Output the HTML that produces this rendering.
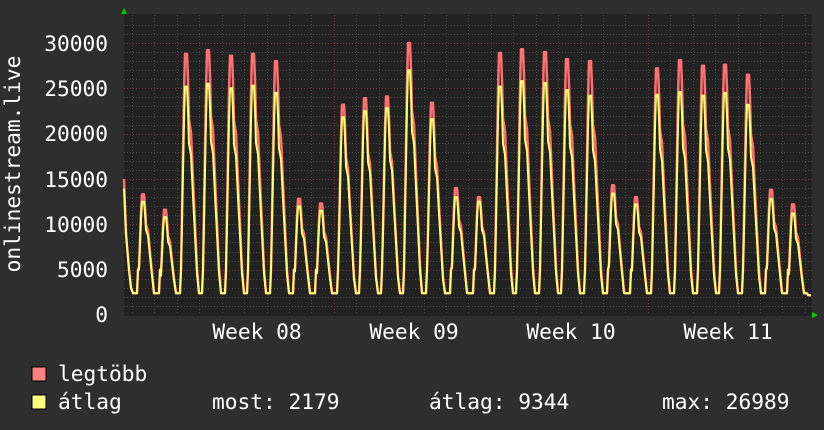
<!DOCTYPE html>
<html><head><meta charset="utf-8"><style>
html,body{margin:0;padding:0;background:#2e2e2e;width:824px;height:430px;overflow:hidden}
svg{display:block}
text{font-family:"DejaVu Sans Mono","Liberation Mono",monospace;fill:#fff;font-size:21.2px}
</style></head><body>
<svg id="s" width="824" height="430" xmlns="http://www.w3.org/2000/svg">
<rect width="824" height="430" fill="#2e2e2e"/>
<rect x="124" y="14" width="688" height="302" fill="#222"/>
<g id="grid"></g>
<path id="mx" fill="none" stroke="#ff7070" stroke-width="2.5" stroke-linejoin="round"/>
<path id="av" fill="none" stroke="#ffff70" stroke-width="2" stroke-linejoin="round"/>
<polygon points="121,14 127,14 124,8" fill="#00cc00"/>
<polygon points="812,312 812,318 818,315" fill="#00cc00"/>
<g text-anchor="end">
<text x="108" y="51">30000</text>
<text x="108" y="96">25000</text>
<text x="108" y="141">20000</text>
<text x="108" y="187">15000</text>
<text x="108" y="232">10000</text>
<text x="108" y="277">5000</text>
<text x="108" y="322">0</text>
</g>
<g text-anchor="middle">
<text x="257" y="339">Week 08</text>
<text x="414" y="339">Week 09</text>
<text x="571" y="339">Week 10</text>
<text x="728" y="339">Week 11</text>
</g>
<text transform="translate(20,164) rotate(-90)" text-anchor="middle">onlinestream.live</text>
<rect x="32" y="367" width="14" height="14" fill="#ff8080" stroke="#000" stroke-width="1"/>
<rect x="32" y="395" width="14" height="14" fill="#ffff80" stroke="#000" stroke-width="1"/>
<text x="58" y="381">legtöbb</text>
<text x="58" y="409">átlag</text>
<text x="212" y="409">most: 2179</text>
<text x="429" y="409">átlag: 9344</text>
<text x="662" y="409">max: 26989</text>
</svg>
<script>
var NS="http://www.w3.org/2000/svg",g=document.getElementById('grid');
function ln(x1,y1,x2,y2,c,d){var l=document.createElementNS(NS,'line');l.setAttribute('x1',x1);l.setAttribute('y1',y1);l.setAttribute('x2',x2);l.setAttribute('y2',y2);l.setAttribute('stroke',c);l.setAttribute('stroke-width',1);if(d)l.setAttribute('stroke-dasharray',d);g.appendChild(l);}
function Y(v){return 315-v*272/30000;}
for(var v=1000;v<=32000;v+=1000){var y=Math.round(Y(v))+0.5;if(y<15)break;ln(124,y,812,y,v%5000==0?'#6a3535':'#444','1,2');}
for(var x=132;x<812;x+=22.43){var xx=Math.round(x)+0.5;ln(xx,15,xx,315,'#444','1,2');}
[177,334,491,648,805].forEach(function(x){ln(x+0.5,15,x+0.5,315,'#6a3535','1,2');});
var P=[[143,13300,12500],[165,11600,10800],[186,28800,25200],[208,29200,25500],[231,28600,25000],[253,28800,25300],[276,28000,24500],[299,12800,12000],[321,12300,11500],[343,23200,21800],[365,23900,22500],[387,24100,22800],[409,30000,27000],[432,23400,21600],[456,14000,13000],[479,13000,12500],[500,28900,25200],[522,29300,25800],[545,29000,25600],[567,28200,24800],[590,28000,24200],[613,14300,13400],[636,13000,12200],[657,27200,24300],[680,28100,24600],[703,27500,24200],[725,27600,24500],[748,26500,23200],[771,13800,12800],[793,12200,11200]];
function build(k){
 var pts=[[124,15000*(k==1?1:0.93)],[126,9000],[129,5000],[131,3000],[133,2400]];
 var sh=[[-6,0],[-5,-1],[-4,0.4],[-2,0.85],[-1,1],[1,1],[2,0.9],[3,0.75],[5,0.7],[7,0.52],[9,0.35],[11,0.18],[13,0.08],[14,0]];
 P.forEach(function(p){var pk=p[k],x=p[0];
  sh.forEach(function(s){var v;if(s[1]==0)v=2400;else if(s[1]==-1)v=5000;else v=Math.max(2400,pk*s[1]);pts.push([x+s[0],v]);});
 });
 pts.push([808,2200],[811,2180]);
 return 'M'+pts.map(function(q){return q[0]+','+Y(q[1]).toFixed(1);}).join('L');
}
document.getElementById('mx').setAttribute('d',build(1));
document.getElementById('av').setAttribute('d',build(2));
</script>
</body></html>
